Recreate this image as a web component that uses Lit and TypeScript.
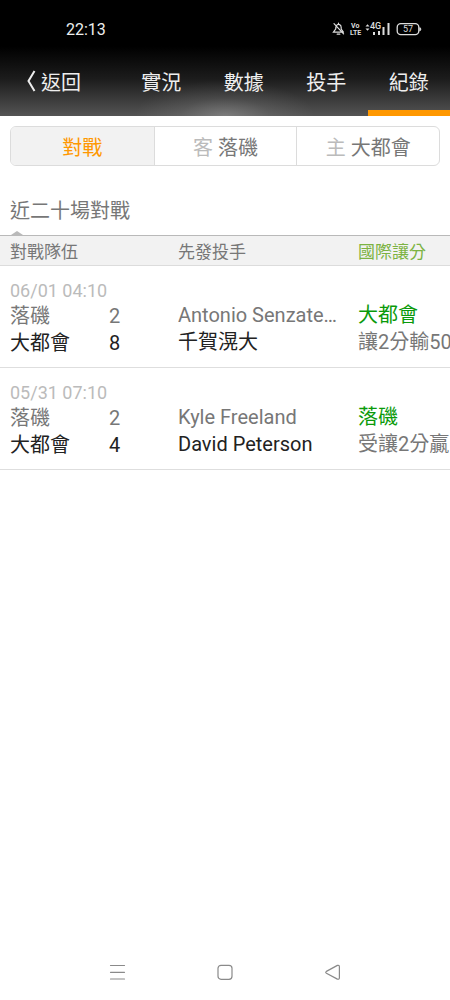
import { LitElement, html, css, svg } from "lit";
import { customElement, state } from "lit/decorators.js";
import { classMap } from "lit/directives/class-map.js";

interface Game {
  time: string;
  away: string;
  awayScore: number;
  home: string;
  homeScore: number;
  awayPitcher: string;
  homePitcher: string;
  pick: string;
  result: string;
}

const GAMES: Game[] = [
  {
    time: "06/01 04:10",
    away: "落磯",
    awayScore: 2,
    home: "大都會",
    homeScore: 8,
    awayPitcher: "Antonio Senzate…",
    homePitcher: "千賀滉大",
    pick: "大都會",
    result: "讓2分輸50",
  },
  {
    time: "05/31 07:10",
    away: "落磯",
    awayScore: 2,
    home: "大都會",
    homeScore: 4,
    awayPitcher: "Kyle Freeland",
    homePitcher: "David Peterson",
    pick: "落磯",
    result: "受讓2分贏",
  },
];

@customElement("status-bar")
export class StatusBar extends LitElement {
  static styles = css`
    :host {
      display: flex;
      justify-content: space-between;
      align-items: center;
      height: 58px;
      padding: 0 27px 0 66px;
      color: #eee;
      font-size: 16px;
    }
    .icons {
      display: block;
    }
    .tiny {
      font: 700 7px Roboto, sans-serif;
      fill: #ddd;
    }
    .net {
      font: 500 9px Roboto, sans-serif;
      fill: #ddd;
    }
    .level {
      font: 400 9px Roboto, sans-serif;
      fill: #ddd;
    }
  `;

  render() {
    return html`
      <span>22:13</span>
      <svg class="icons" width="91" height="18" viewBox="0 0 91 18" fill="none" stroke="#ddd">
        ${svg`
          <path d="M3.8 6.8V8.8L1.4 12.2H9.6M4.8 5.2C6.4 3.6 9.2 4.6 9.2 7.4V9L11.4 12.2M5.2 14.2H7.8M6.5 3V4.3M2 3.6L11.6 13.8" stroke-width="1.2" stroke-linecap="round"/>
          <text class="tiny" stroke="none" x="19" y="8">Vo</text>
          <text class="tiny" stroke="none" x="18" y="15">LTE</text>
          <path d="M33.5 6.6L35.5 4.2L37.5 6.6ZM33.5 8.4H37.5L35.5 10.8Z" fill="#ddd" stroke="none" />
          <text class="net" stroke="none" x="38" y="9">4G</text>
          <path d="M41 12H43V15H41ZM46 11H48V15H46ZM50.5 7H52.5V15H50.5ZM55.5 3H57.5V15H55.5Z" fill="#ddd" stroke="none"/>
          <rect x="65.2" y="3.7" width="21.6" height="11" rx="3.6" stroke-width="1.3"/>
          <path d="M87.8 7.5C89.1 8.2 89.1 10.2 87.8 10.9Z" fill="#ddd" />
          <text class="level" stroke="none" x="76" y="12.4" text-anchor="middle">57</text>
        `}
      </svg>
    `;
  }
}

@customElement("system-nav")
export class SystemNav extends LitElement {
  static styles = css`
    :host {
      display: flex;
      justify-content: center;
      height: 56px;
    }
    .key {
      width: 24%;
      display: grid;
      place-items: center;
      border: 0;
      padding: 0;
      background: none;
    }
  `;

  render() {
    return html`
      <button class="key" aria-label="最近使用">
        <svg width="18" height="18" viewBox="0 0 18 18" fill="none" stroke="#8a8a8a" stroke-width="1.2" stroke-linecap="round">
          <path d="M2.5 2.5H16.5M2.5 9.3H16.5M2.5 16H16.5" />
        </svg>
      </button>
      <button class="key" aria-label="主畫面">
        <svg width="18" height="18" viewBox="0 0 18 18" fill="none" stroke="#8a8a8a" stroke-width="1.2">
          <rect x="2" y="2.3" width="14" height="14" rx="3" />
        </svg>
      </button>
      <button class="key" aria-label="返回">
        <svg width="18" height="18" viewBox="0 0 18 18" fill="none" stroke="#8a8a8a" stroke-width="1.2" stroke-linejoin="round">
          <path d="M2.4 8.4L13.4 2.4Q15.4 1.9 15.4 3.8V14.8Q15.4 16.7 13.4 16.1L2.4 10.2Q1 9.3 2.4 8.4Z" />
        </svg>
      </button>
    `;
  }
}

@customElement("record-table")
export class RecordTable extends LitElement {
  static styles = css`
    :host {
      display: block;
      overflow: hidden;
    }
    .table {
      width: 100%;
      table-layout: fixed;
      border-collapse: separate;
      border-spacing: 0;
    }
    .team-col {
      width: 168px;
    }
    .pitcher-col {
      width: 180px;
    }
    .head {
      height: 29px;
      padding: 0 0 0 10px;
      background: #f2f2f2;
      border-top: 1px solid #b9b9b9;
      border-bottom: 1px solid #dcdcdc;
      color: #777;
      font-size: 17px;
      font-weight: 400;
      text-align: left;
      white-space: nowrap;
    }
    .head.spread {
      color: #7cb342;
    }
    .cell {
      padding: 36px 0 11px 10px;
      border-bottom: 1px solid #dedede;
      vertical-align: top;
      font-size: 20px;
      line-height: 27px;
      color: #777;
      white-space: nowrap;
    }
    .cell.teams {
      padding: 13px 0 10px 10px;
    }
    .time {
      font-size: 18px;
      line-height: 24px;
      color: #bbb;
    }
    .line {
      display: grid;
      grid-template-columns: 1fr 59px;
    }
    .name {
      overflow: hidden;
      text-overflow: ellipsis;
      margin-right: 4px;
    }
    .home {
      color: #222;
    }
    .pick {
      color: #0a9a0a;
    }
  `;

  render() {
    return html`
      <table class="table">
        <colgroup>
          <col class="team-col" />
          <col class="pitcher-col" />
          <col />
        </colgroup>
        <thead>
          <tr>
            <th class="head" scope="col">對戰隊伍</th>
            <th class="head" scope="col">先發投手</th>
            <th class="head spread" scope="col">國際讓分</th>
          </tr>
        </thead>
        <tbody>
          ${GAMES.map(
            (g) => html`
              <tr>
                <td class="cell teams">
                  <div class="time">${g.time}</div>
                  <div class="line"><span>${g.away}</span><span>${g.awayScore}</span></div>
                  <div class="line home"><span>${g.home}</span><span>${g.homeScore}</span></div>
                </td>
                <td class="cell">
                  <div class="name">${g.awayPitcher}</div>
                  <div class="name home">${g.homePitcher}</div>
                </td>
                <td class="cell">
                  <div class="pick">${g.pick}</div>
                  <div>${g.result}</div>
                </td>
              </tr>
            `
          )}
        </tbody>
      </table>
    `;
  }
}

@customElement("app-root")
export class AppRoot extends LitElement {
  @state() private page = "紀錄";
  @state() private segment = 0;

  static styles = css`
    :host {
      display: flex;
      flex-direction: column;
      min-height: 100vh;
      background: #fff;
      color: #777;
      font-family: Roboto, "Noto Sans CJK TC", sans-serif;
      font-size: 20px;
    }
    .top {
      background:
        radial-gradient(ellipse 90px 36px at 50% 100%, rgba(255, 255, 255, 0.24), rgba(255, 255, 255, 0.08) 50%, transparent),
        linear-gradient(#000 40%, #1c1c1c 68%, #545454);
    }
    .nav {
      display: grid;
      grid-template-columns: 4fr 11fr;
      height: 58px;
    }
    .back,
    .tab,
    .segment {
      border: 0;
      margin: 0;
      background: none;
      font: inherit;
      white-space: nowrap;
    }
    .back {
      min-width: 0;
      display: flex;
      align-items: center;
      gap: 5px;
      padding: 0 0 12px 26px;
      color: #eee;
    }
    .tabs {
      display: grid;
      grid-template-columns: repeat(4, 1fr);
    }
    .tab {
      padding: 0 0 6px;
      border-bottom: 6px solid transparent;
      color: #eee;
    }
    .tab.active {
      border-bottom-color: #ff9800;
    }
    .segments {
      display: grid;
      grid-template-columns: repeat(3, 1fr);
      height: 38px;
      margin: 10px;
      border: 1px solid #dcdcdc;
      border-radius: 6px;
      overflow: hidden;
    }
    .segment {
      padding: 0;
      color: #777;
    }
    .segment + .segment {
      border-left: 1px solid #dcdcdc;
    }
    .segment.active {
      background: #f2f2f2;
      color: #ff9800;
    }
    .side {
      color: #bbb;
    }
    .title {
      margin: 25px 10px 0;
      font-size: 20px;
      font-weight: 400;
      line-height: 40px;
    }
    .marker {
      display: block;
      margin-left: 10px;
    }
    .content {
      flex: 1;
    }
  `;

  render() {
    const segments = [
      { side: "", name: "對戰" },
      { side: "客", name: "落磯" },
      { side: "主", name: "大都會" },
    ];
    return html`
      <header class="top">
        <status-bar></status-bar>
        <nav class="nav">
          <button class="back">
            <svg width="10" height="24" viewBox="0 0 10 24" fill="none" stroke="#eee" stroke-width="2">
              <path d="M8.5 2L2.5 12L8.5 22" />
            </svg>
            <span>返回</span>
          </button>
          <div class="tabs">
            ${["實況", "數據", "投手", "紀錄"].map(
              (name) => html`
                <button
                  class=${classMap({ tab: true, active: name === this.page })}
                  @click=${() => (this.page = name)}
                >${name}</button>
              `
            )}
          </div>
        </nav>
      </header>
      <main class="content">
        <div class="segments">
          ${segments.map(
            (s, i) => html`
              <button
                class=${classMap({ segment: true, active: i === this.segment })}
                @click=${() => (this.segment = i)}
              >${s.side ? html`<span class="side">${s.side}</span> ` : ""}${s.name}</button>
            `
          )}
        </div>
        <h2 class="title">近二十場對戰</h2>
        <svg class="marker" width="14" height="4" viewBox="0 0 14 4" fill="#b9b9b9">
          <path d="M1 4L7 0L13 4Z" />
        </svg>
        <record-table></record-table>
      </main>
      <system-nav></system-nav>
    `;
  }
}
